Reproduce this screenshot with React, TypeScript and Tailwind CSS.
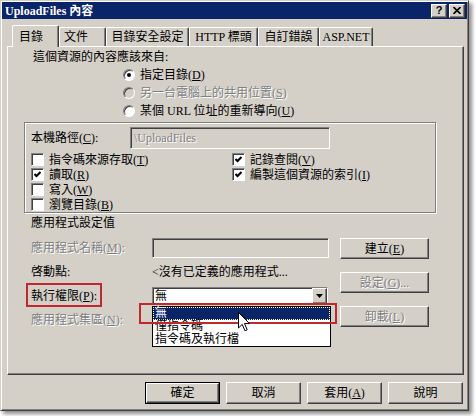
import React from "react";

const raised =
  "bg-[#d4d0c8] border border-t-white border-l-white border-r-[#404040] border-b-[#404040] shadow-[inset_-1px_-1px_0_#808080]";
const sunken =
  "border border-t-[#808080] border-l-[#808080] border-r-white border-b-white shadow-[inset_1px_1px_0_#404040]";
const dim = "text-[#808080] [text-shadow:1px_1px_0_#fff]";

function Hot({ text, k, tail = "" }: { text: string; k: string; tail?: string }) {
  return (
    <>
      {text}(<span className="underline underline-offset-1">{k}</span>){tail}
    </>
  );
}

function Check({ on }: { on?: boolean }) {
  return (
    <span className={`w-[13px] h-[13px] shrink-0 bg-white flex items-center justify-center ${sunken}`}>
      {on && (
        <svg width="7" height="7" viewBox="0 0 7 7">
          <path d="M0.5 3 L2.5 5 L6.5 1" stroke="#000" strokeWidth="2" fill="none" />
        </svg>
      )}
    </span>
  );
}

function Radio({ on, off }: { on?: boolean; off?: boolean }) {
  return (
    <span
      className={`w-[12px] h-[12px] shrink-0 rounded-full flex items-center justify-center ${sunken} ${
        off ? "bg-[#d4d0c8]" : "bg-white"
      }`}
    >
      {on && <span className="w-[4px] h-[4px] rounded-full bg-black" />}
    </span>
  );
}

function Btn({ children, w = "w-[75px]", h = "h-[22px]", def }: { children: React.ReactNode; w?: string; h?: string; def?: boolean }) {
  if (def)
    return (
      <div className={`${w} ${h} border border-black`}>
        <div className={`w-full h-full flex items-center justify-center ${raised}`}>{children}</div>
      </div>
    );
  return <div className={`${w} ${h} flex items-center justify-center ${raised}`}>{children}</div>;
}

const tabs = [
  { label: "目錄", cls: "w-[47px] pl-[6px]", sel: true },
  { label: "文件", cls: "w-[47px] pl-[4px]" },
  { label: "目錄安全設定", cls: "w-[83px] justify-center" },
  { label: "HTTP 標頭", cls: "w-[69px] justify-center" },
  { label: "自訂錯誤", cls: "w-[61px] justify-center" },
  { label: "ASP.NET", cls: "w-[54px] justify-center" },
];

export default function App() {
  return (
    <div className="w-[476px] h-[416px] bg-white overflow-hidden font-['Liberation_Serif','Noto_Sans_CJK_TC','Noto_Sans_CJK_SC',sans-serif] text-[12px] leading-[14px] text-black">
      <div className="relative w-[469px] h-[411px] bg-[#d4d0c8] border border-t-[#d4d0c8] border-l-[#d4d0c8] border-r-[#404040] border-b-[#404040] shadow-[inset_1px_1px_0_#fff,inset_-1px_-1px_0_#808080,3px_3px_4px_rgba(0,0,0,0.45)] p-[1px] flex flex-col">
        {/* title bar */}
        <div className="h-[17px] bg-[#0a246a] flex items-center pl-[3px] pr-[2px]">
          <span className="flex-1 text-white font-bold">UploadFiles 內容</span>
          <div className="flex gap-[2px]">
            <div className={`w-[16px] h-[14px] flex items-center justify-center font-bold text-[11px] leading-none font-['Liberation_Sans',sans-serif] ${raised}`}>?</div>
            <div className={`w-[16px] h-[14px] flex items-center justify-center ${raised}`}>
              <svg width="8" height="7" viewBox="0 0 8 7">
                <path d="M0.5 0 L7.5 7 M7.5 0 L0.5 7" stroke="#000" strokeWidth="1.6" />
              </svg>
            </div>
          </div>
        </div>

        {/* tabs */}
        <div className="mt-[6px] flex items-end pl-[10px]">
          {tabs.map((t) =>
            t.sel ? (
              <div
                key={t.label}
                className={`relative z-10 -mb-px h-[22px] flex items-center bg-[#d4d0c8] rounded-t-[2px] border-t border-l border-r border-t-white border-l-white border-r-[#404040] shadow-[inset_-1px_0_0_#808080] ${t.cls}`}
              >
                {t.label}
              </div>
            ) : (
              <div
                key={t.label}
                className={`h-[19px] flex items-center rounded-t-[2px] border-t border-l border-r border-t-white border-l-white border-r-[#404040] shadow-[inset_-1px_0_0_#808080] ${t.cls}`}
              >
                {t.label}
              </div>
            )
          )}
        </div>

        {/* panel */}
        <div className="ml-[5px] w-[457px] h-[329px] border border-t-white border-l-white border-r-[#404040] border-b-[#404040] shadow-[inset_-1px_-1px_0_#808080] flex flex-col">
          <div className="mt-[3px] h-[14px] pl-[25px]">這個資源的內容應該來自:</div>
          <div className="mt-[2px] pl-[115px] flex flex-col">
            <div className="h-[18px] flex items-center gap-[5px]">
              <Radio on />
              <span><Hot text="指定目錄" k="D" /></span>
            </div>
            <div className="h-[18px] flex items-center gap-[5px]">
              <Radio off />
              <span className={dim}><Hot text="另一台電腦上的共用位置" k="S" /></span>
            </div>
            <div className="h-[18px] flex items-center gap-[5px]">
              <Radio />
              <span><Hot text="某個 URL 位址的重新導向" k="U" /></span>
            </div>
          </div>

          {/* group box */}
          <div className="mt-[2px] ml-[16px] w-[412px] border border-[#808080] shadow-[inset_1px_1px_0_#fff,1px_1px_0_#fff] flex flex-col">
            <div className="mt-[4px] h-[22px] pl-[6px] flex items-center">
              <span className="w-[99px]"><Hot text="本機路徑" k="C" tail=":" /></span>
              <div className={`w-[200px] h-[22px] flex items-center pl-[3px] bg-[#d4d0c8] ${sunken}`}>
                <span className={dim}>\UploadFiles</span>
              </div>
            </div>
            <div className="mt-[3px] pl-[6px] grid grid-cols-[201px_auto]">
              <div className="h-[15px] flex items-center gap-[5px]"><Check /><span><Hot text="指令碼來源存取" k="T" /></span></div>
              <div className="h-[15px] flex items-center gap-[5px]"><Check on /><span><Hot text="記錄查閱" k="V" /></span></div>
              <div className="h-[15px] flex items-center gap-[5px]"><Check on /><span><Hot text="讀取" k="R" /></span></div>
              <div className="h-[15px] flex items-center gap-[5px]"><Check on /><span><Hot text="編製這個資源的索引" k="I" /></span></div>
              <div className="h-[15px] flex items-center gap-[5px]"><Check /><span><Hot text="寫入" k="W" /></span></div>
              <div />
              <div className="h-[15px] flex items-center gap-[5px]"><Check /><span><Hot text="瀏覽目錄" k="B" /></span></div>
              <div />
            </div>
          </div>

          <div className="mt-[3px] h-[14px] pl-[23px]">應用程式設定值</div>

          <div className="pl-[23px] flex">
            <div className="w-[298px] flex flex-col">
              <div className="mt-[8px] h-[20px] flex items-center">
                <span className={`w-[121px] ${dim}`}><Hot text="應用程式名稱" k="M" tail=":" /></span>
                <div className={`w-[177px] h-[20px] bg-[#d4d0c8] ${sunken}`} />
              </div>
              <div className="mt-[7px] h-[14px] flex items-center">
                <span className="w-[121px]">啓動點:</span>
                <span>&lt;沒有已定義的應用程式...</span>
              </div>
              <div className="mt-[8px] h-[18px] flex items-center">
                <span className="w-[121px]"><Hot text="執行權限" k="P" tail=":" /></span>
                <div className={`w-[176px] h-[18px] bg-white flex items-center ${sunken}`}>
                  <span className="flex-1 pl-[2px]">無</span>
                  <div className={`w-[15px] h-full flex items-center justify-center ${raised}`}>
                    <svg width="7" height="4" viewBox="0 0 7 4">
                      <path d="M0 0 H7 L3.5 4 Z" fill="#000" />
                    </svg>
                  </div>
                </div>
              </div>
              <div className="mt-[8px] h-[14px] flex items-center">
                <span className={dim}><Hot text="應用程式集區" k="N" tail=":" /></span>
              </div>
            </div>
            <div className="ml-[11px] flex flex-col">
              <div className="mt-[8px]"><Btn w="w-[89px]" h="h-[21px]"><span><Hot text="建立" k="E" /></span></Btn></div>
              <div className="mt-[13px]"><Btn w="w-[89px]" h="h-[21px]"><span className={dim}><Hot text="設定" k="G" tail="..." /></span></Btn></div>
              <div className="mt-[13px]"><Btn w="w-[89px]" h="h-[21px]"><span className={dim}><Hot text="卸載" k="L" /></span></Btn></div>
            </div>
          </div>
        </div>

        {/* dialog buttons */}
        <div className="mt-[7px] mr-[4px] flex justify-end gap-[6px]">
          <Btn def>確定</Btn>
          <Btn>取消</Btn>
          <Btn><span><Hot text="套用" k="A" /></span></Btn>
          <Btn>說明</Btn>
        </div>

        {/* open drop-down list */}
        <div className="absolute left-[151px] top-[305px] w-[179px] h-[41px] bg-white border border-black flex flex-col z-20 leading-[13px]">
          <div className="h-[13px] bg-[#0a246a] text-white border border-dotted border-[#ffffc0] pl-[1px] leading-[11px]">無</div>
          <div className="h-[13px] pl-[2px]">僅指令碼</div>
          <div className="h-[13px] pl-[2px]">指令碼及執行檔</div>
        </div>

        {/* annotations */}
        <div className="absolute left-[25px] top-[282px] w-[76px] h-[24px] border-2 border-[#c1272d] z-30" />
        <div className="absolute left-[138px] top-[302px] w-[198px] h-[21px] border-2 border-[#c1272d] z-30" />

        {/* mouse pointer */}
        <svg className="absolute left-[237px] top-[311px] z-40" width="12" height="20" viewBox="0 0 12 20">
          <path d="M0.5 0.5 L0.5 16 L4.2 12.4 L7 18.8 L9.2 17.8 L6.5 11.6 L11.5 11.6 Z" fill="#fff" stroke="#000" strokeWidth="1" />
        </svg>
      </div>
    </div>
  );
}
